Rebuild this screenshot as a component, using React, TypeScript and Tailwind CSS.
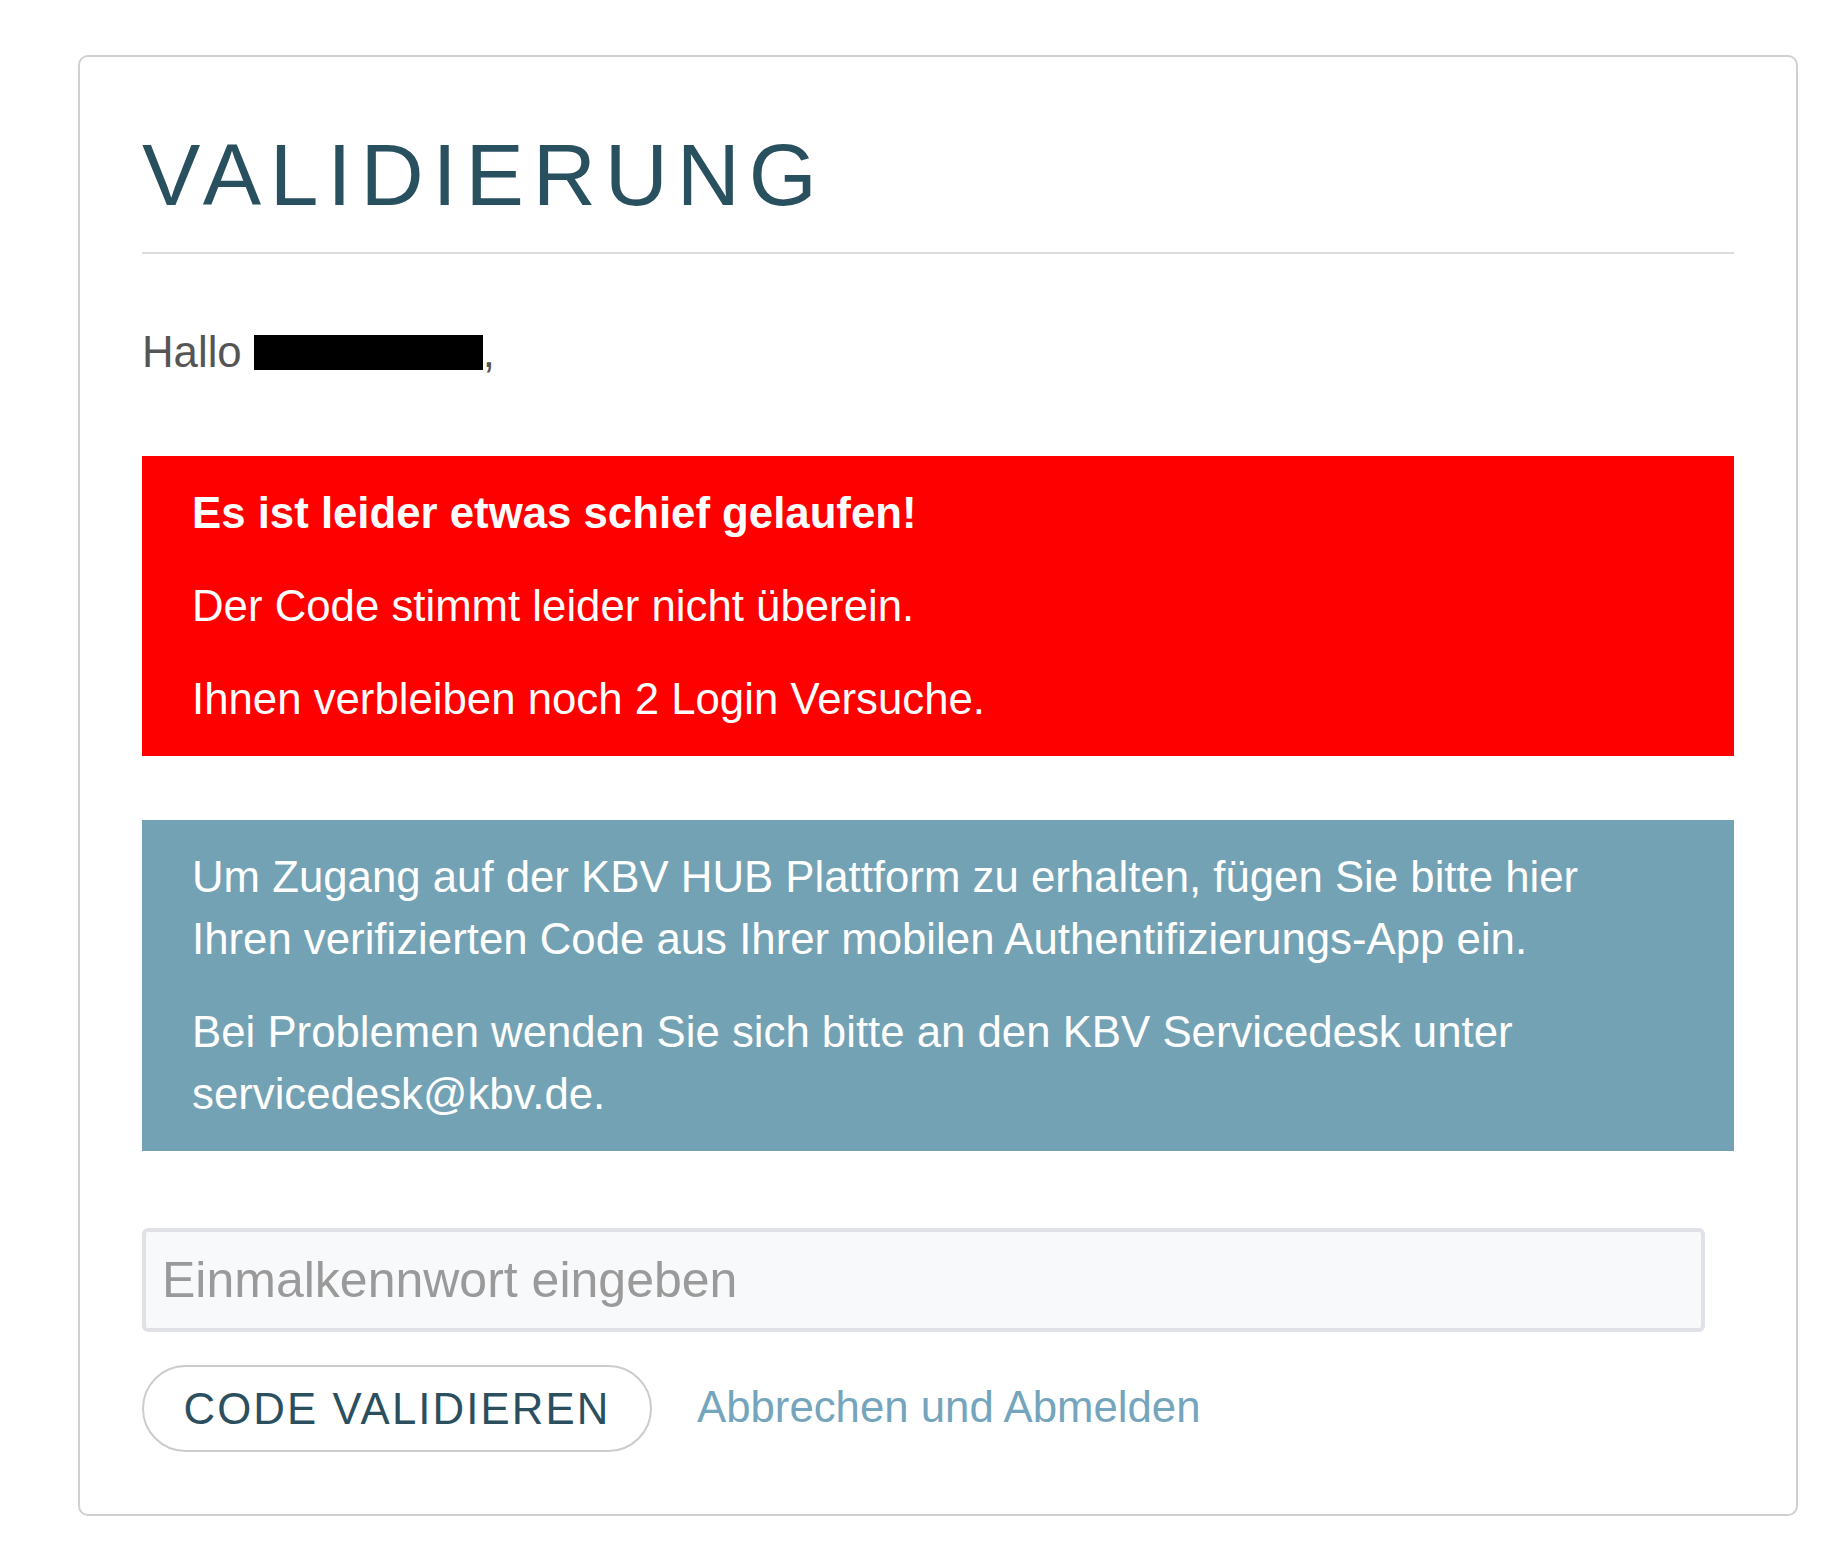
export default function App() {
  return (
    <div className="min-h-[1555px] bg-white pt-[55px] pl-[78px] font-['Liberation_Sans',Arial,sans-serif]">
      <div className="w-[1720px] rounded-[10px] border-2 border-[#d0d0d0] bg-white px-[62px] pb-[62px] pt-[70px]">
        <div className="border-b-2 border-[#dddddd] pb-[29px]">
          <h1 className="text-[87.5px] font-normal leading-[96px] tracking-[8.8px] text-[#29505f]">
            VALIDIERUNG
          </h1>
        </div>

        <p className="mt-[67px] text-[43.75px] leading-[62px] text-[#555555]">
          Hallo{' '}
          <span className="inline-block h-[35px] w-[229px] translate-y-[3px] bg-black align-baseline" />
          ,
        </p>

        <div className="mt-[73px] bg-[#ff0000] px-[50px] py-[26px] text-[43.75px] leading-[62px] text-white">
          <p className="font-bold">Es ist leider etwas schief gelaufen!</p>
          <p className="mt-[31px]">Der Code stimmt leider nicht überein.</p>
          <p className="mt-[31px]">Ihnen verbleiben noch 2 Login Versuche.</p>
        </div>

        <div className="mt-[64px] bg-[#74a2b5] px-[50px] py-[26px] text-[43.75px] leading-[62px] text-white">
          <p>
            Um Zugang auf der KBV HUB Plattform zu erhalten, fügen Sie bitte hier Ihren
            verifizierten Code aus Ihrer mobilen Authentifizierungs-App ein.
          </p>
          <p className="mt-[31px]">
            Bei Problemen wenden Sie sich bitte an den KBV Servicedesk unter servicedesk@kbv.de.
          </p>
        </div>

        <input
          type="text"
          placeholder="Einmalkennwort eingeben"
          className="mt-[77px] block h-[104px] w-[1563px] rounded-[6px] border-4 border-[#dfe1e7] bg-[#f8f9fb] px-[16px] text-[50px] text-[#333333] outline-none placeholder:text-[#9a9a9a]"
        />

        <div className="mt-[33px] flex items-center gap-[45px]">
          <button
            type="button"
            className="h-[87px] w-[510px] rounded-full border-2 border-[#cccccc] bg-white text-[43.75px] leading-[62px] tracking-[2.1px] text-[#2b4f5e]"
          >
            CODE VALIDIEREN
          </button>
          <a href="#" className="-translate-y-[2px] text-[43.75px] leading-[62px] text-[#74a5bd]">
            Abbrechen und Abmelden
          </a>
        </div>
      </div>
    </div>
  );
}
